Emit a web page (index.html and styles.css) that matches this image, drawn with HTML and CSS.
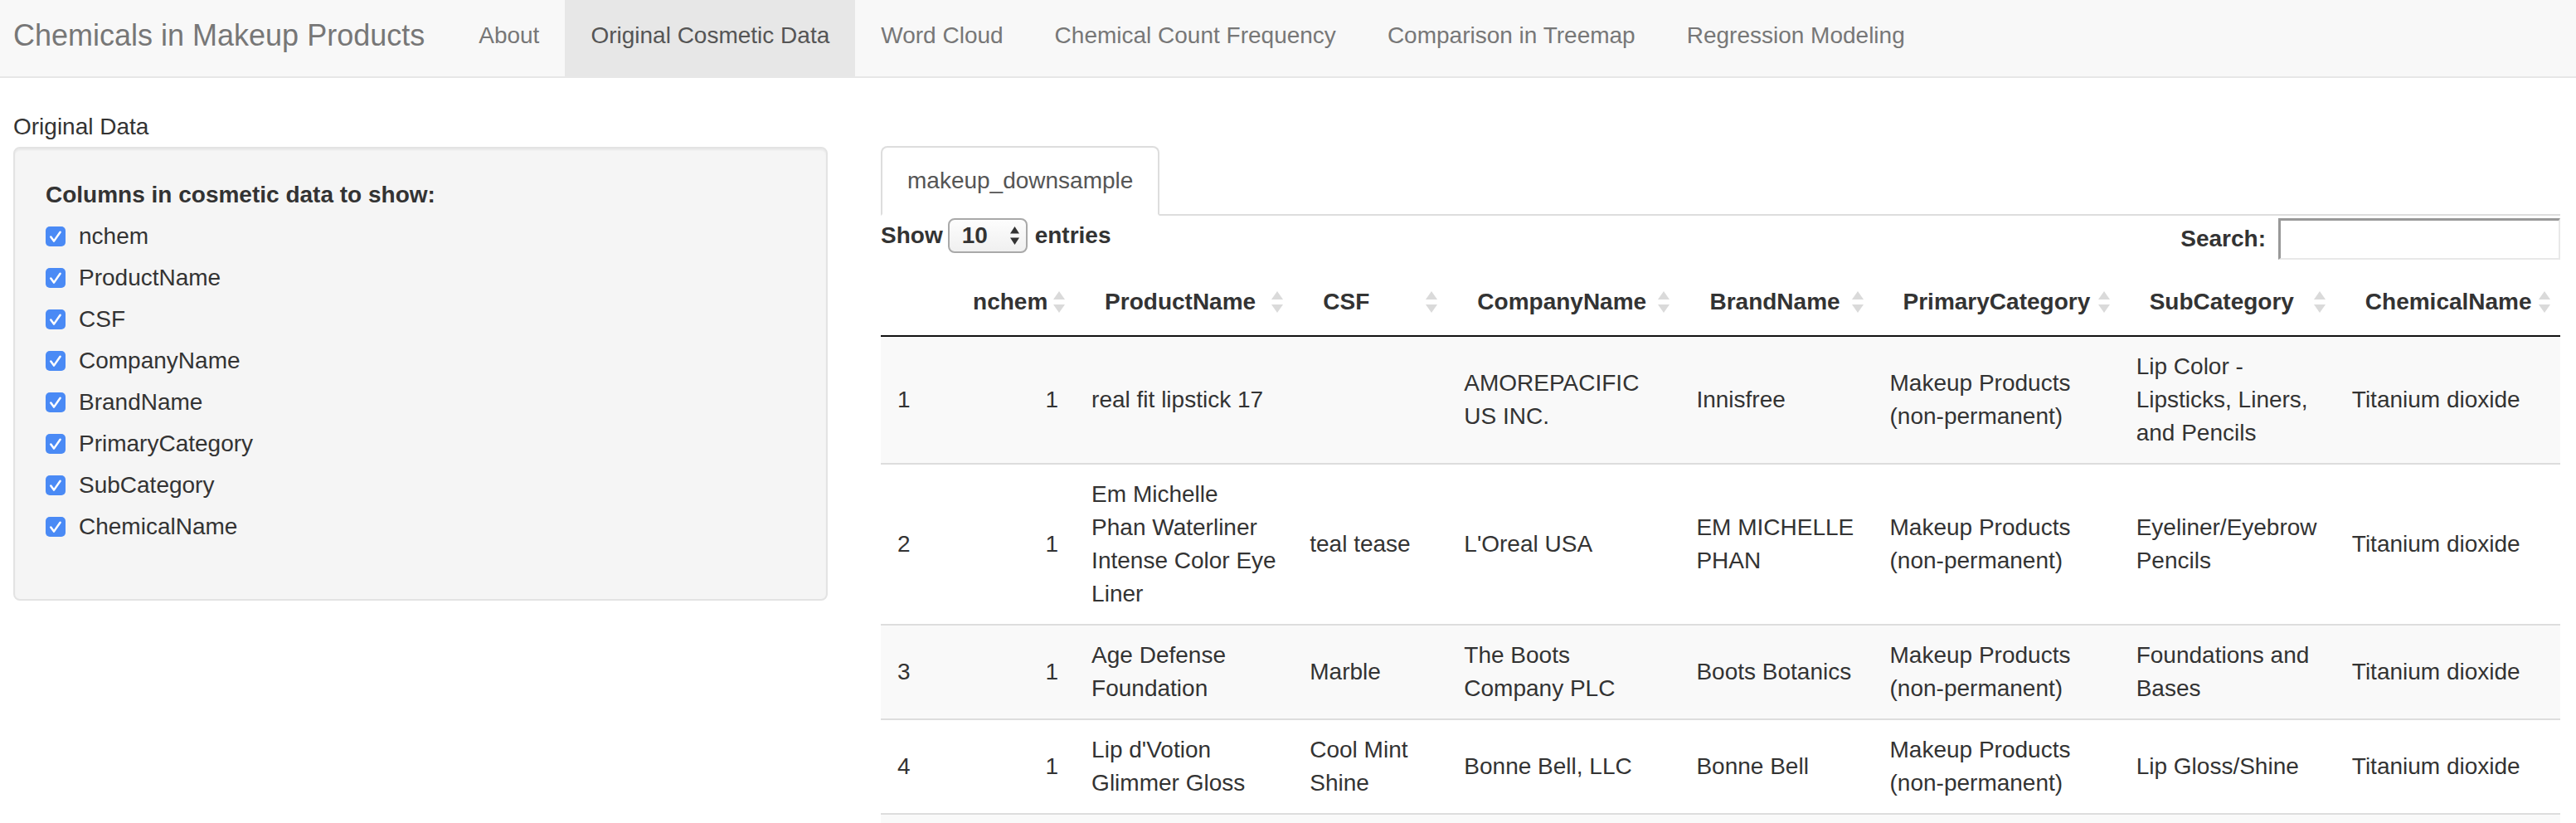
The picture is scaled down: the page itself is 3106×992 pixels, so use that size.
FILE: index.html
```html
<!DOCTYPE html>
<html lang="en">
<head>
<meta charset="utf-8">
<title>Chemicals in Makeup Products</title>
<link rel="stylesheet" href="styles.css">
</head>
<body>
<nav class="navbar">
  <span class="brand">Chemicals in Makeup Products</span>
  <ul class="nav">
    <li><a href="#">About</a></li>
    <li class="active"><a href="#">Original Cosmetic Data</a></li>
    <li><a href="#">Word Cloud</a></li>
    <li><a href="#">Chemical Count Frequency</a></li>
    <li><a href="#">Comparison in Treemap</a></li>
    <li><a href="#">Regression Modeling</a></li>
  </ul>
</nav>

<div class="page">
  <div class="page-title">Original Data</div>
  <div class="layout">
    <aside class="well">
      <div class="group-label">Columns in cosmetic data to show:</div>
      <ul class="checks">
        <li><svg class="cb" viewBox="0 0 24 24"><rect width="24" height="24" rx="5" fill="#4a8af5"/><path d="M6.3 12.6L10 17.6L17.6 6.8" fill="none" stroke="#fff" stroke-width="2.5" stroke-linecap="round" stroke-linejoin="round"/></svg><span>nchem</span></li>
        <li><svg class="cb" viewBox="0 0 24 24"><rect width="24" height="24" rx="5" fill="#4a8af5"/><path d="M6.3 12.6L10 17.6L17.6 6.8" fill="none" stroke="#fff" stroke-width="2.5" stroke-linecap="round" stroke-linejoin="round"/></svg><span>ProductName</span></li>
        <li><svg class="cb" viewBox="0 0 24 24"><rect width="24" height="24" rx="5" fill="#4a8af5"/><path d="M6.3 12.6L10 17.6L17.6 6.8" fill="none" stroke="#fff" stroke-width="2.5" stroke-linecap="round" stroke-linejoin="round"/></svg><span>CSF</span></li>
        <li><svg class="cb" viewBox="0 0 24 24"><rect width="24" height="24" rx="5" fill="#4a8af5"/><path d="M6.3 12.6L10 17.6L17.6 6.8" fill="none" stroke="#fff" stroke-width="2.5" stroke-linecap="round" stroke-linejoin="round"/></svg><span>CompanyName</span></li>
        <li><svg class="cb" viewBox="0 0 24 24"><rect width="24" height="24" rx="5" fill="#4a8af5"/><path d="M6.3 12.6L10 17.6L17.6 6.8" fill="none" stroke="#fff" stroke-width="2.5" stroke-linecap="round" stroke-linejoin="round"/></svg><span>BrandName</span></li>
        <li><svg class="cb" viewBox="0 0 24 24"><rect width="24" height="24" rx="5" fill="#4a8af5"/><path d="M6.3 12.6L10 17.6L17.6 6.8" fill="none" stroke="#fff" stroke-width="2.5" stroke-linecap="round" stroke-linejoin="round"/></svg><span>PrimaryCategory</span></li>
        <li><svg class="cb" viewBox="0 0 24 24"><rect width="24" height="24" rx="5" fill="#4a8af5"/><path d="M6.3 12.6L10 17.6L17.6 6.8" fill="none" stroke="#fff" stroke-width="2.5" stroke-linecap="round" stroke-linejoin="round"/></svg><span>SubCategory</span></li>
        <li><svg class="cb" viewBox="0 0 24 24"><rect width="24" height="24" rx="5" fill="#4a8af5"/><path d="M6.3 12.6L10 17.6L17.6 6.8" fill="none" stroke="#fff" stroke-width="2.5" stroke-linecap="round" stroke-linejoin="round"/></svg><span>ChemicalName</span></li>
      </ul>
    </aside>

    <main class="main">
      <ul class="tabs">
        <li class="active"><a href="#">makeup_downsample</a></li>
      </ul>

      <div class="dt-controls">
        <div class="dt-length">Show <span class="select"><span>10</span><svg class="sel-arrows" viewBox="0 0 12 24"><polygon points="6,1 11.5,9.5 0.5,9.5" fill="#333"/><polygon points="0.5,14.5 11.5,14.5 6,23" fill="#333"/></svg></span> entries</div>
        <div class="dt-filter">Search:<span class="search"></span></div>
      </div>

      <table class="dt">
        <colgroup>
          <col class="c0"><col class="c1"><col class="c2"><col class="c3"><col class="c4"><col class="c5"><col class="c6"><col class="c7"><col class="c8">
        </colgroup>
        <thead>
          <tr>
            <th></th>
            <th class="num">nchem<svg class="sort" viewBox="0 0 16 28"><polygon points="8,1 15,11 1,11" /><polygon points="1,17 15,17 8,27" /></svg></th>
            <th>ProductName<svg class="sort" viewBox="0 0 16 28"><polygon points="8,1 15,11 1,11" /><polygon points="1,17 15,17 8,27" /></svg></th>
            <th>CSF<svg class="sort" viewBox="0 0 16 28"><polygon points="8,1 15,11 1,11" /><polygon points="1,17 15,17 8,27" /></svg></th>
            <th>CompanyName<svg class="sort" viewBox="0 0 16 28"><polygon points="8,1 15,11 1,11" /><polygon points="1,17 15,17 8,27" /></svg></th>
            <th>BrandName<svg class="sort" viewBox="0 0 16 28"><polygon points="8,1 15,11 1,11" /><polygon points="1,17 15,17 8,27" /></svg></th>
            <th>PrimaryCategory<svg class="sort" viewBox="0 0 16 28"><polygon points="8,1 15,11 1,11" /><polygon points="1,17 15,17 8,27" /></svg></th>
            <th>SubCategory<svg class="sort" viewBox="0 0 16 28"><polygon points="8,1 15,11 1,11" /><polygon points="1,17 15,17 8,27" /></svg></th>
            <th>ChemicalName<svg class="sort" viewBox="0 0 16 28"><polygon points="8,1 15,11 1,11" /><polygon points="1,17 15,17 8,27" /></svg></th>
          </tr>
        </thead>
        <tbody>
          <tr class="odd">
            <td>1</td>
            <td class="num">1</td>
            <td>real fit lipstick 17</td>
            <td></td>
            <td>AMOREPACIFIC<br>US INC.</td>
            <td>Innisfree</td>
            <td>Makeup Products<br>(non-permanent)</td>
            <td>Lip Color -<br>Lipsticks, Liners,<br>and Pencils</td>
            <td>Titanium dioxide</td>
          </tr>
          <tr>
            <td>2</td>
            <td class="num">1</td>
            <td>Em Michelle<br>Phan Waterliner<br>Intense Color Eye<br>Liner</td>
            <td>teal tease</td>
            <td>L'Oreal USA</td>
            <td>EM MICHELLE<br>PHAN</td>
            <td>Makeup Products<br>(non-permanent)</td>
            <td>Eyeliner/Eyebrow<br>Pencils</td>
            <td>Titanium dioxide</td>
          </tr>
          <tr class="odd">
            <td>3</td>
            <td class="num">1</td>
            <td>Age Defense<br>Foundation</td>
            <td>Marble</td>
            <td>The Boots<br>Company PLC</td>
            <td>Boots Botanics</td>
            <td>Makeup Products<br>(non-permanent)</td>
            <td>Foundations and<br>Bases</td>
            <td>Titanium dioxide</td>
          </tr>
          <tr>
            <td>4</td>
            <td class="num">1</td>
            <td>Lip d'Votion<br>Glimmer Gloss</td>
            <td>Cool Mint<br>Shine</td>
            <td>Bonne Bell, LLC</td>
            <td>Bonne Bell</td>
            <td>Makeup Products<br>(non-permanent)</td>
            <td>Lip Gloss/Shine</td>
            <td>Titanium dioxide</td>
          </tr>
          <tr class="odd filler">
            <td></td><td></td><td></td><td></td><td></td><td></td><td></td><td></td><td></td>
          </tr>
        </tbody>
      </table>
    </main>
  </div>
</div>
</body>
</html>
```

FILE: styles.css
```css
* {
  box-sizing: border-box;
}

html,
body {
  margin: 0;
  padding: 0;
}

body {
  font-family: "Liberation Sans", Arial, Helvetica, sans-serif;
  font-size: 28px;
  line-height: 40px;
  color: #333;
  background: #fff;
}

/* ---------- navbar ---------- */
.navbar {
  display: flex;
  align-items: stretch;
  height: 94px;
  background: #f8f8f8;
  border-bottom: 2px solid #e7e7e7;
}

.brand {
  font-size: 36px;
  line-height: 40px;
  color: #777;
  padding: 23px 34px 29px 16px;
}

.nav {
  display: flex;
  list-style: none;
  margin: 0;
  padding: 0;
}

.nav a {
  display: block;
  padding: 23px 31px 29px;
  color: #777;
  text-decoration: none;
}

.nav .active a {
  background: #e7e7e7;
  color: #555;
}

/* ---------- page ---------- */
.page {
  padding: 39px 19px 0 16px;
}

.page-title {
  line-height: 40px;
  margin-bottom: 3px;
}

.layout {
  display: grid;
  grid-template-columns: 982px 1fr;
  column-gap: 64px;
  align-items: start;
}

/* ---------- sidebar ---------- */
.well {
  margin-top: 1px;
  background: #f5f5f5;
  border: 2px solid #e3e3e3;
  border-radius: 8px;
  box-shadow: inset 0 2px 2px rgba(0, 0, 0, 0.05);
  padding: 36px 37px 67px;
}

.group-label {
  font-weight: bold;
  margin-bottom: 10px;
}

.checks {
  list-style: none;
  margin: 0;
  padding: 0;
  display: flex;
  flex-direction: column;
  gap: 10px;
}

.checks li {
  display: flex;
  align-items: center;
  gap: 16px;
  height: 40px;
}

.cb {
  width: 24px;
  height: 24px;
  flex: none;
}

/* ---------- tabs ---------- */
.tabs {
  display: flex;
  list-style: none;
  margin: 0;
  padding: 0;
  border-bottom: 2px solid #ddd;
}

.tabs li {
  margin-bottom: -2px;
}

.tabs a {
  display: block;
  padding: 20px 30px;
  border: 2px solid #ddd;
  border-bottom-color: transparent;
  border-radius: 8px 8px 0 0;
  background: #fff;
  color: #555;
  text-decoration: none;
}

/* ---------- datatable controls ---------- */
.dt-controls {
  display: flex;
  justify-content: space-between;
  align-items: flex-start;
  margin-top: 3px;
  font-weight: bold;
}

.dt-length {
  display: flex;
  align-items: center;
  height: 42px;
}

.select {
  display: inline-flex;
  align-items: center;
  justify-content: space-between;
  width: 96px;
  height: 42px;
  margin: 0 9px 0 6px;
  padding: 0 7px 0 15px;
  border: 2px solid #a9a9a9;
  border-radius: 8px;
  background: linear-gradient(#fdfdfd, #f0f0f0);
}

.sel-arrows {
  width: 13px;
  height: 24px;
}

.dt-filter {
  display: flex;
  align-items: center;
}

.search {
  display: block;
  width: 340px;
  height: 50px;
  margin-left: 15px;
  border-style: solid;
  border-width: 3px 2px 2px 3px;
  border-color: #999 #e8e8e8 #e8e8e8 #999;
  background: #fff;
}

/* ---------- table ---------- */
.dt {
  width: 100%;
  table-layout: fixed;
  border-collapse: separate;
  border-spacing: 0;
  margin-top: 11px;
}

.c0 { width: 75px; }
.c1 { width: 159px; }
.c2 { width: 263px; }
.c3 { width: 186px; }
.c4 { width: 280px; }
.c5 { width: 233px; }
.c6 { width: 297px; }
.c7 { width: 260px; }
.c8 { width: 271px; }

.dt th {
  position: relative;
  text-align: left;
  font-weight: bold;
  padding: 20px 36px;
  vertical-align: middle;
  white-space: nowrap;
  border-bottom: 2px solid #111;
}

.dt th.num,
.dt td.num {
  text-align: right;
}

.sort {
  position: absolute;
  right: 11px;
  top: 50%;
  width: 16px;
  height: 28px;
  margin-top: -14px;
  fill: #dadada;
}

.dt td {
  padding: 16px 20px;
  vertical-align: middle;
  white-space: nowrap;
  border-bottom: 2px solid #ddd;
}

.dt tr.odd td {
  background: #f9f9f9;
}

.dt tr.filler td {
  height: 80px;
}
```
